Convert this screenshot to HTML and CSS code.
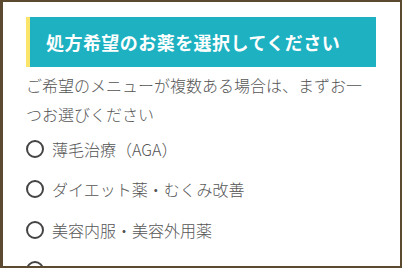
FILE: index.html
```html
<!DOCTYPE html>
<html lang="ja">
<head>
<meta charset="utf-8">
<link rel="stylesheet" href="styles.css">
</head>
<body>
<div class="frame">
  <div class="content">
    <h2 class="heading">処方希望のお薬を選択してください</h2>
    <p class="lead">ご希望のメニューが複数ある場合は、まずお一つお選びください</p>
    <ul class="options">
      <li class="option"><span class="radio"></span><span class="label">薄毛治療（AGA）</span></li>
      <li class="option"><span class="radio"></span><span class="label">ダイエット薬・むくみ改善</span></li>
      <li class="option"><span class="radio"></span><span class="label">美容内服・美容外用薬</span></li>
      <li class="option"><span class="radio"></span></li>
    </ul>
  </div>
</div>
</body>
</html>
```
FILE: styles.css
```css
html, body {
  margin: 0;
  padding: 0;
  width: 402px;
  height: 268px;
  overflow: hidden;
  background: #5b4a2f;
}
.frame {
  box-sizing: border-box;
  width: 402px;
  height: 268px;
  border-style: solid;
  border-color: #5b4a2f;
  border-width: 2px 2px 2px 3px;
  background: #fff;
  overflow: hidden;
}
.content {
  padding: 15px 24px 0 23px;
  font-family: "Noto Sans CJK JP", "Noto Sans", sans-serif;
  color: #555;
}
.heading {
  margin: 0;
  height: 50px;
  box-sizing: border-box;
  display: flex;
  align-items: center;
  background: #1db1c1;
  border-left: 4px solid #fbe46a;
  padding-left: 16px;
  color: #fff;
  font-size: 18px;
  font-weight: bold;
  letter-spacing: 0.45px;
}
.lead {
  margin: 4px 0 0;
  font-size: 16px;
  font-weight: 300;
  line-height: 28.8px;
  color: #555;
}
.options {
  list-style: none;
  margin: 0;
  padding: 0;
}
.option {
  display: flex;
  align-items: center;
  height: 40.5px;
  gap: 8px;
  font-size: 16px;
  font-weight: 300;
}
.radio {
  box-sizing: border-box;
  width: 18px;
  height: 18px;
  border: 2px solid #444;
  border-radius: 50%;
  flex: none;
}
.label {
  line-height: 1;
}
```
